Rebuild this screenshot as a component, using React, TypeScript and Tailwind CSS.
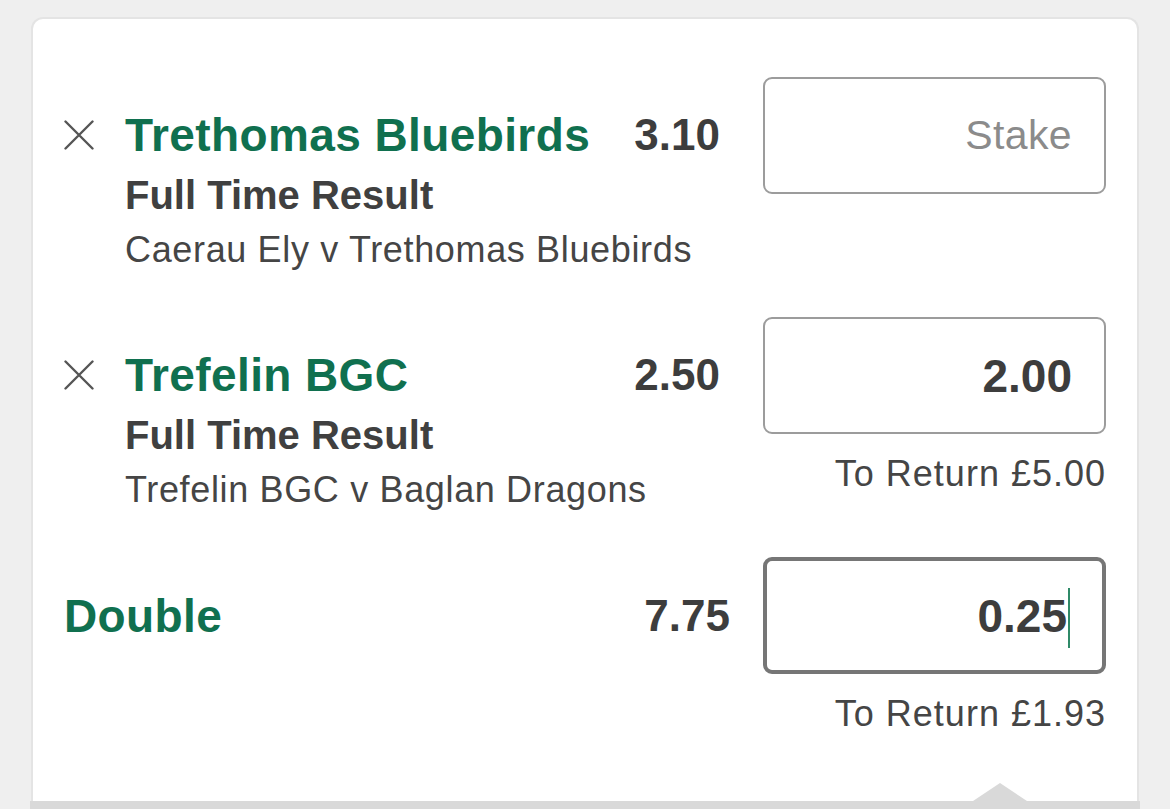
const font = { fontFamily: '"Liberation Sans", Arial, sans-serif' };

function CloseIcon() {
  return (
    <svg width="30" height="30" viewBox="0 0 30 30" fill="none">
      <path d="M1.5 1.5L28.5 28.5M28.5 1.5L1.5 28.5" stroke="#555" strokeWidth="2.4" strokeLinecap="round" />
    </svg>
  );
}

function StakeBox({ value, placeholder, focused }: { value?: string; placeholder?: string; focused?: boolean }) {
  return (
    <div
      className={`h-[117px] w-[343px] rounded-[9px] bg-white flex items-center justify-end ${
        focused ? "border-4 border-[#767676] pr-[32px]" : "border-2 border-[#9c9c9c] pr-[32px]"
      }`}
    >
      {value ? (
        <span className="text-[46px] font-bold text-[#3d3d3d] leading-none">{value}</span>
      ) : (
        <span className="text-[41px] tracking-[0.4px] text-[#8b8b8b] leading-none">{placeholder}</span>
      )}
      {focused && <span className="w-[2px] h-[60px] bg-[#2f8a68] ml-[1px] mt-[4px]"></span>}
    </div>
  );
}

function Selection({
  team,
  odds,
  match,
  stake,
  toReturn,
  className,
}: {
  team: string;
  odds: string;
  match: string;
  stake?: string;
  toReturn?: string;
  className?: string;
}) {
  return (
    <div className={`flex items-start ${className ?? ""}`}>
      <div className="flex-1 min-w-0">
        <div className="flex items-center h-[48px] mt-[34px]">
          <div className="w-[61px] flex items-center">
            <CloseIcon />
          </div>
          <div className="flex-1 text-[46px] font-bold tracking-[0.4px] text-[#10704f] leading-[48px] whitespace-nowrap">{team}</div>
          <div className="text-[44px] font-bold text-[#3d3d3d] leading-[48px] mr-[43px]">{odds}</div>
        </div>
        <div className="pl-[61px] mt-[8px] text-[40px] font-bold text-[#404040] leading-[56px]">Full Time Result</div>
        <div className="pl-[61px] text-[36px] tracking-[0.65px] text-[#454545] leading-[54px] whitespace-nowrap">{match}</div>
      </div>
      <div className="flex flex-col items-end">
        <StakeBox value={stake} placeholder="Stake" />
        {toReturn && (
          <div className="mt-[20px] text-[36px] tracking-[1px] text-[#454545] leading-[40px]">To Return {toReturn}</div>
        )}
      </div>
    </div>
  );
}

export default function App() {
  return (
    <div className="w-full h-[809px] overflow-hidden bg-[#efefef] pt-[17px] pl-[31px] pr-[31px] flex flex-col" style={font}>
      <div className="flex-1 flex flex-col bg-white border-2 border-b-0 border-[#e4e4e4] rounded-t-[12px] relative">
        <div className="flex-1 px-[31px] pt-[58px]">
          <Selection
            team="Trethomas Bluebirds"
            odds="3.10"
            match="Caerau Ely v Trethomas Bluebirds"
          />
          <Selection
            className="mt-[40px]"
            team="Trefelin BGC"
            odds="2.50"
            match="Trefelin BGC v Baglan Dragons"
            stake="2.00"
            toReturn="£5.00"
          />
          <div className="flex items-start mt-[40px]">
            <div className="flex-1 h-[117px] flex items-center">
              <div className="flex-1 text-[46px] font-bold tracking-[0.4px] text-[#10704f] leading-[48px]">Double</div>
              <div className="text-[44px] font-bold text-[#3d3d3d] leading-[48px] mr-[33px]">7.75</div>
            </div>
            <div className="flex flex-col items-end">
              <StakeBox value="0.25" focused />
              <div className="mt-[20px] text-[36px] tracking-[1px] text-[#454545] leading-[40px]">To Return £1.93</div>
            </div>
          </div>
        </div>
        <div className="relative h-[8px] bg-[#d9d9d9] -mx-[3px]">
          <div className="absolute left-[943px] -top-[18px] w-0 h-0 border-l-[27px] border-r-[27px] border-b-[18px] border-l-transparent border-r-transparent border-b-[#d9d9d9]"></div>
        </div>
      </div>
    </div>
  );
}
